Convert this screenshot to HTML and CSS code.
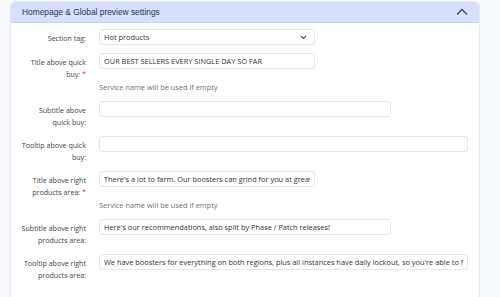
FILE: index.html
```html
<!DOCTYPE html>
<html lang="en">
<head>
    <meta charset="UTF-8">
    <title>Preview settings</title>
    <link rel="stylesheet" href="styles.css">
</head>
<body>
    <div class="card">
        <div class="card-header">
            <span>Homepage &amp; Global preview settings</span>
            <svg class="chevron" width="12" height="8" viewBox="0 0 12 8"><path d="M1 6.5 L6 1.5 L11 6.5" fill="none" stroke="#3b4670" stroke-width="1.3"/></svg>
        </div>
        <div class="card-body">
            <div class="row">
                <label class="label">Section tag:</label>
                <div class="field">
                    <div class="select-wrap w-sm">
                        <select class="control">
                            <option>Hot products</option>
                        </select>
                        <svg class="select-arrow" width="7" height="5" viewBox="0 0 7 5"><path d="M1 1 L3.5 3.5 L6 1" fill="none" stroke="#555" stroke-width="1.2"/></svg>
                    </div>
                </div>
            </div>
            <div class="row">
                <label class="label">Title above quick<br>buy: <span class="req">*</span></label>
                <div class="field">
                    <input class="control w-sm" type="text" value="OUR BEST SELLERS EVERY SINGLE DAY SO FAR">
                    <div class="help">Service name will be used if empty</div>
                </div>
            </div>
            <div class="row">
                <label class="label">Subtitle above<br>quick buy:</label>
                <div class="field">
                    <input class="control w-md" type="text">
                </div>
            </div>
            <div class="row">
                <label class="label">Tooltip above quick<br>buy:</label>
                <div class="field">
                    <input class="control w-lg" type="text">
                </div>
            </div>
            <div class="row">
                <label class="label">Title above right<br>products area: <span class="req">*</span></label>
                <div class="field">
                    <input class="control w-sm" type="text" value="There's a lot to farm. Our boosters can grind for you at great prices!">
                    <div class="help">Service name will be used if empty</div>
                </div>
            </div>
            <div class="row">
                <label class="label">Subtitle above right<br>products area:</label>
                <div class="field">
                    <input class="control w-md" type="text" value="Here's our recommendations, also split by Phase / Patch releases!">
                </div>
            </div>
            <div class="row">
                <label class="label">Tooltip above right<br>products area:</label>
                <div class="field">
                    <input class="control w-lg" type="text" value="We have boosters for everything on both regions, plus all instances have daily lockout, so you're able to farm during the week.">
                </div>
            </div>
        </div>
    </div>
</body>
</html>
```

FILE: styles.css
```css
body {
    margin: 0;
    background: #f8f9fd;
    font-family: "Open Sans", "Noto Sans", sans-serif;
    color: #333;
    height: 297px;
    overflow: hidden;
}
.card {
    margin: 1px 0 0 10px;
    width: 468px;
    height: 320px;
    background: #fff;
    border: 1px solid #e6e9f4;
    border-radius: 5px;
}
.card-header {
    display: flex;
    justify-content: space-between;
    align-items: center;
    height: 20px;
    padding: 0 11px 0 11px;
    background: #d6e0fc;
    border-bottom: 1px solid #c9d3f6;
    border-radius: 5px 5px 0 0;
    font-family: "Liberation Sans", Arial, sans-serif;
    font-size: 8.4px;
    color: #2b3556;
}
.card-body {
    padding-top: 6px;
}
.row {
    display: flex;
    gap: 13px;
    margin-bottom: 8px;
}
.label {
    width: 65px;
    margin-left: 10px;
    padding-top: 3px;
    text-align: right;
    white-space: nowrap;
    font-size: 7.1px;
    line-height: 12px;
    color: #444;
}
.req {
    color: #d9363e;
}
.field {
    display: flex;
    flex-direction: column;
}
.control {
    display: block;
    box-sizing: border-box;
    height: 16px;
    padding: 0 4px;
    border: 1px solid #e4e6ec;
    border-radius: 3px;
    background: #fff;
    font-family: inherit;
    font-size: 7.4px;
    color: #333;
    outline: none;
}
select.control {
    appearance: none;
    -webkit-appearance: none;
    width: 100%;
}
.select-wrap {
    position: relative;
}
.select-arrow {
    position: absolute;
    right: 8px;
    top: 6px;
}
.w-sm { width: 216px; }
.w-md { width: 292px; }
.w-lg { width: 369px; }
.help {
    margin-top: 12px;
    font-size: 7.4px;
    line-height: 12px;
    color: #6c7280;
}
```
